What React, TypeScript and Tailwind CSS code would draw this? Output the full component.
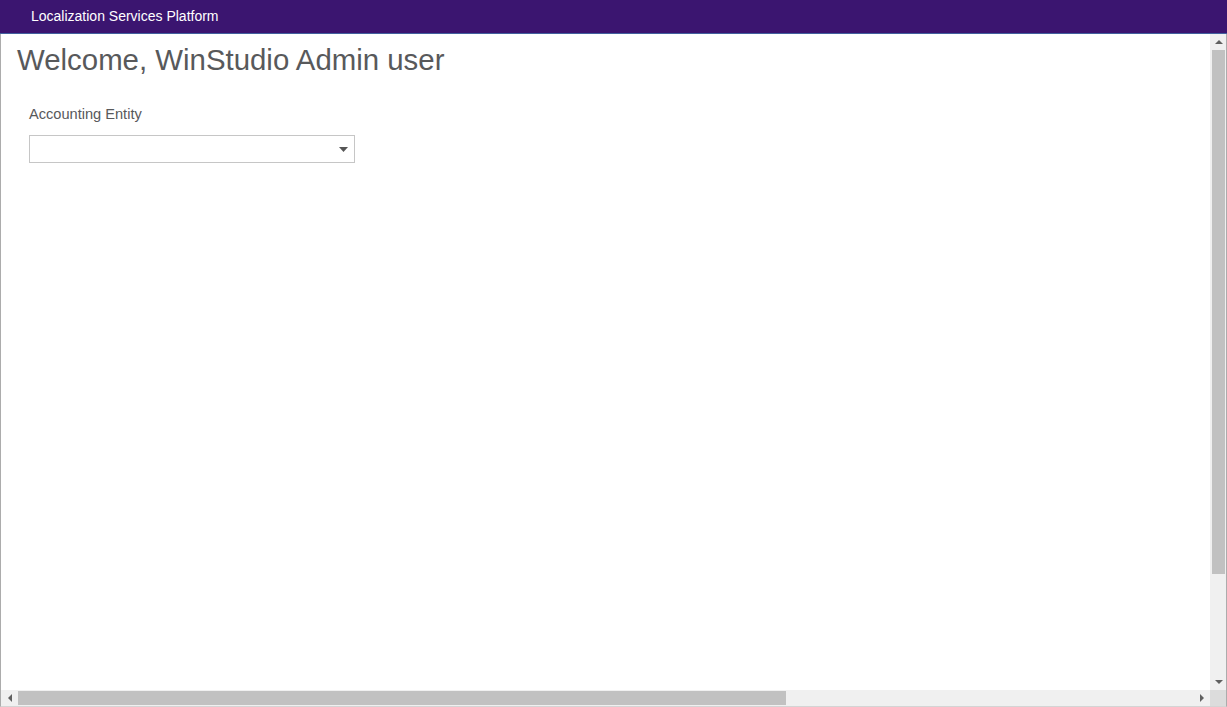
import React from 'react';

// small scrollbar arrows drawn as triangles
function Arrow({ dir }: { dir: 'up' | 'down' | 'left' | 'right' }) {
  const pts = {
    up: '0,4 4,0 8,4',
    down: '0,0 8,0 4,4',
    left: '4,0 4,8 0,4',
    right: '0,0 0,8 4,4',
  }[dir];
  const vertical = dir === 'up' || dir === 'down';
  return (
    <svg width={vertical ? 8 : 4} height={vertical ? 4 : 8} viewBox={vertical ? '0 0 8 4' : '0 0 4 8'}>
      <polygon points={pts} fill="#606060" />
    </svg>
  );
}

export default function App() {
  return (
    <div className="flex h-[707px] w-[1227px] flex-col overflow-hidden bg-white font-['Liberation_Sans',Arial,sans-serif]">
      <header className="h-[34px] shrink-0 border-b border-[#41609e] bg-[#3b1570] pl-[31px] text-[14px] leading-[33px] text-white">
        Localization Services Platform
      </header>

      <div className="flex min-h-0 flex-1 flex-col border-x border-b border-x-[#acacac] border-b-[#d4d4d4]">
        <div className="flex min-h-0 flex-1">
          <main className="min-w-0 flex-1 pl-[16px] text-[#58595b]">
            <h1 className="pt-[9px] text-[29.4px] leading-[33px]">Welcome, WinStudio Admin user</h1>
            <div className="pl-[12px] pt-[30px]">
              <label className="block text-[14.6px] leading-[17px]">Accounting Entity</label>
              <div className="mt-[12px] flex h-[28px] w-[326px] items-center justify-end border border-[#c6c6c6] bg-white pr-[6px]">
                <svg width="9" height="5" viewBox="0 0 9 5">
                  <polygon points="0,0 9,0 4.5,5" fill="#555555" />
                </svg>
              </div>
            </div>
          </main>

          {/* vertical scrollbar */}
          <div className="flex w-[16px] shrink-0 flex-col bg-[#f0f0f0]">
            <div className="flex h-[16px] items-center justify-center pl-[1px]">
              <Arrow dir="up" />
            </div>
            <div className="flex-1 pl-[2px] pr-[1px]">
              <div className="h-[524px] bg-[#c1c1c1]" />
            </div>
            <div className="flex h-[16px] items-center justify-center pl-[1px]">
              <Arrow dir="down" />
            </div>
          </div>
        </div>

        {/* horizontal scrollbar */}
        <div className="flex h-[16px] shrink-0">
          <div className="flex flex-1 bg-[#f0f0f0]">
            <div className="flex w-[16px] items-center justify-center pl-[1px]">
              <Arrow dir="left" />
            </div>
            <div className="flex-1 py-[1px] pl-[1px]">
              <div className="h-full w-[768px] bg-[#c1c1c1]" />
            </div>
            <div className="flex w-[16px] items-center justify-center pr-[1px]">
              <Arrow dir="right" />
            </div>
          </div>
          <div className="w-[16px] bg-[#dcdcdc]" />
        </div>
      </div>
    </div>
  );
}
